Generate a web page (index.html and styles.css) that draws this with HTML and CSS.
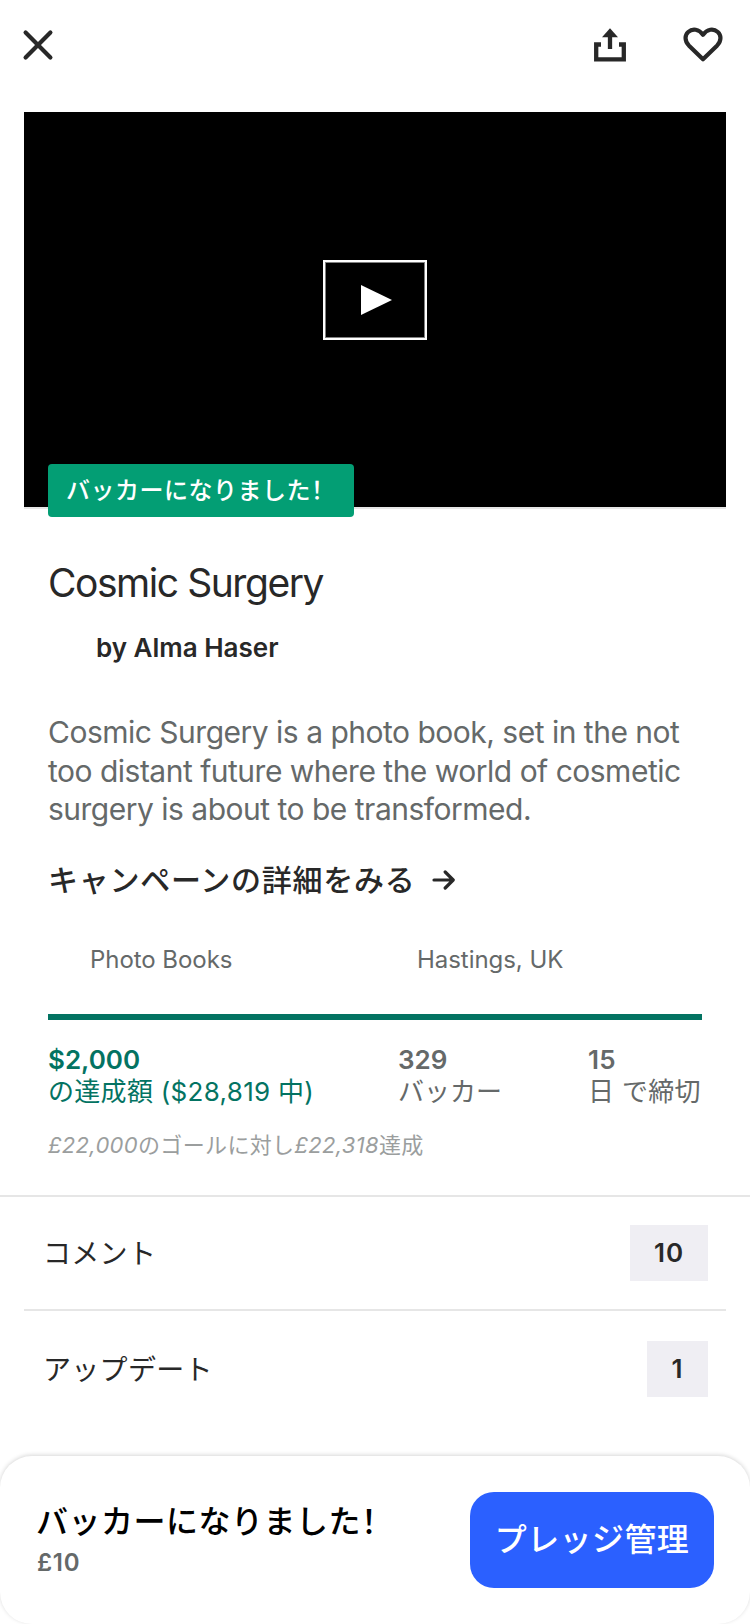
FILE: index.html
```html
<!DOCTYPE html>
<html lang="ja">
<head>
<meta charset="utf-8">
<title>Cosmic Surgery</title>
<link rel="stylesheet" href="styles.css">
</head>
<body>
<div class="page">
  <header class="toolbar">
    <svg class="icon-close" viewBox="0 0 32 32"><path d="M3.600 3.600 28.400 28.400M28.400 3.600 3.600 28.400"/></svg>
    <span class="toolbar-gap"></span>
    <svg class="icon-share" viewBox="0 0 34 34"><path class="line" d="M8 16.500H3.200V31.400H30.800V16.500H26M17 21V8"/><path class="solid" d="M17 .3 25 9.300H9Z"/></svg>
    <svg class="icon-heart" viewBox="0 0 40 36"><path d="M20 32.200 5.800 18.400C1.300 13.800 1.800 8 5.200 5 9.500 1.200 16 2 20 7.800 24 2 30.500 1.200 34.800 5 38.200 8 38.700 13.800 34.200 18.400Z"/></svg>
  </header>

  <section class="hero">
    <div class="play"><svg class="icon-play" viewBox="0 0 31 30"><path d="M0 0 31 15 0 30Z"/></svg></div>
    <div class="ribbon"><span class="t-ribbon">バッカーになりました<span class="half">！</span></span></div>
  </section>

  <main class="body">
    <h1 class="title">Cosmic Surgery</h1>
    <p class="author">by Alma Haser</p>
    <p class="blurb"><span>Cosmic Surgery is a photo book, set in the not</span><span>too distant future where the world of cosmetic</span><span>surgery is about to be transformed.</span></p>
    <div class="more"><span class="t-more">キャンペーンの詳細をみる</span><svg class="icon-arrow" viewBox="0 0 24 20"><path d="M2 10H21M13.200 2 21.200 10 13.200 18"/></svg></div>
    <div class="meta"><span class="category">Photo Books</span><span class="place">Hastings, UK</span></div>
    <div class="progress"></div>
    <div class="stats">
      <div class="stat pledged"><b>$2,000</b><span class="t-pledged">の達成額 ($28,819 中)</span></div>
      <div class="stat backers"><b>329</b><span>バッカー</span></div>
      <div class="stat days"><b>15</b><span>日 で締切</span></div>
    </div>
    <p class="goal"><i>£22,000</i>のゴールに対し<i>£22,318</i>達成</p>
  </main>

  <nav class="rows">
    <div class="row first"><span>コメント</span><span class="count">10</span></div>
    <div class="row"><span>アップデート</span><span class="count">1</span></div>
  </nav>

  <footer class="sheet">
    <div class="pledge">
      <span class="t-pledge">バッカーになりました<span class="half">！</span></span>
      <span class="amount">£10</span>
    </div>
    <button class="manage">プレッジ管理</button>
  </footer>
</div>
</body>
</html>
```
FILE: styles.css
```css
* { box-sizing: border-box; }
body { margin: 0; background: #fff; }
h1, p { margin: 0; font-weight: 400; }
.page {
  width: 750px; height: 1624px; overflow: hidden;
  display: flex; flex-direction: column;
  font-family: Inter, "Noto Sans CJK JP", sans-serif;
  color: #282828; white-space: nowrap;
}
svg { display: block; flex: none; fill: none; stroke: #282828; }
.half { font-feature-settings: "halt"; }

.toolbar { height: 112px; flex: none; display: flex; align-items: flex-start; padding: 28px 27px 0 22px; }
.icon-close { width: 32px; height: 32px; margin-top: 1px; stroke-width: 4.200; stroke-linecap: round; }
.toolbar-gap { flex: 1; }
.icon-share { width: 34px; height: 34px; margin-right: 56px; }
.icon-share .line { stroke-width: 4.300; }
.icon-share .solid { fill: #282828; stroke: none; }
.icon-heart { width: 40px; height: 36px; margin-top: -1px; stroke-width: 4.200; stroke-linejoin: round; }

.hero {
  position: relative; height: 397px; flex: none; margin: 0 24px;
  background: #000; border-bottom: 2px solid #e6e6e6;
  display: flex; align-items: flex-start; justify-content: center; padding-top: 148px;
}
.play {
  width: 104px; height: 80px; display: flex; align-items: center; padding-left: 36px;
  border: 2px solid #fff; box-shadow: inset 0 0 0 1px #808080;
}
.icon-play { width: 31px; height: 30px; fill: #fff; stroke: none; }
.ribbon {
  position: absolute; left: 24px; top: 352px; width: 306px; height: 53px;
  padding-left: 18px; border-radius: 4px; background: #039e74; color: #fff;
  font-size: 24px; line-height: 53px; font-weight: 500;
}
.t-ribbon { letter-spacing: .5px; }

.body { padding: 0 48px; height: 686px; flex: none; }
.title { margin-top: 50px; font-size: 39px; line-height: 48px; letter-spacing: -1.450px; }
.author { margin-top: 25px; padding-left: 48px; font-size: 26px; line-height: 32px; font-weight: 600; }
.blurb {
  display: flex; flex-direction: column; align-items: flex-start; margin-top: 49px;
  font-size: 30px; line-height: 38.500px; letter-spacing: -.5px; color: #656969;
}
.more { display: flex; align-items: center; gap: 16px; margin-top: 29px; height: 44px; font-size: 30px; font-weight: 500; }
.t-more { letter-spacing: .75px; margin-top: -3px; }
.icon-arrow { width: 24px; height: 20px; stroke-width: 3.200; stroke-linecap: round; stroke-linejoin: round; }
.meta { display: flex; margin-top: 42px; padding-left: 42px; font-size: 24px; line-height: 32px; letter-spacing: -.05px; color: #656969; }
.category { width: 327px; }
.progress { margin-top: 38px; height: 6px; background: #037362; }
.stats { display: flex; margin-top: 24px; color: #656969; font-size: 26px; line-height: 32px; }
.stat { display: flex; flex-direction: column; align-items: flex-start; }
.stat b { font-weight: 600; }
.pledged { width: 350px; color: #037362; }
.t-pledged { letter-spacing: .3px; }
.backers { width: 190px; }
.days { letter-spacing: .3px; }
.goal { margin-top: 21px; font-size: 22px; line-height: 32px; letter-spacing: .34px; color: #9b9e9e; }

.rows { height: 261px; flex: none; border-top: 2px solid #e6e6e6; padding: 0 24px; }
.row {
  display: flex; align-items: center; justify-content: space-between; height: 116px;
  padding: 0 18px 0 19px; font-size: 28px; line-height: 40px; letter-spacing: .3px;
}
.row > :first-child { margin-top: 2px; }
.first { height: 114px; border-bottom: 2px solid #e6e6e6; }
.count {
  min-width: 61px; padding: 0 24px; height: 56px; line-height: 56px; text-align: center;
  letter-spacing: .9px; background: #efeef3; font-size: 26px; font-weight: 600;
}

.sheet {
  height: 168px; flex: none; display: flex; justify-content: space-between; align-items: center;
  padding: 0 36px; border-radius: 32px; background: #fff; box-shadow: 0 -1px 4px rgba(0, 0, 0, .16);
}
.pledge { display: flex; flex-direction: column; }
.t-pledge { font-size: 32px; line-height: 44px; letter-spacing: .5px; font-weight: 500; color: #000; }
.amount { padding: 1px 0 0 1px; font-size: 24px; line-height: 36px; letter-spacing: .7px; font-weight: 600; color: #656969; }
.manage {
  width: 244px; height: 96px; padding: 0; border: 0; border-radius: 24px; background: #2b60ff;
  color: #fff; font: 500 32px/96px Inter, "Noto Sans CJK JP", sans-serif; letter-spacing: .4px;
}
```
